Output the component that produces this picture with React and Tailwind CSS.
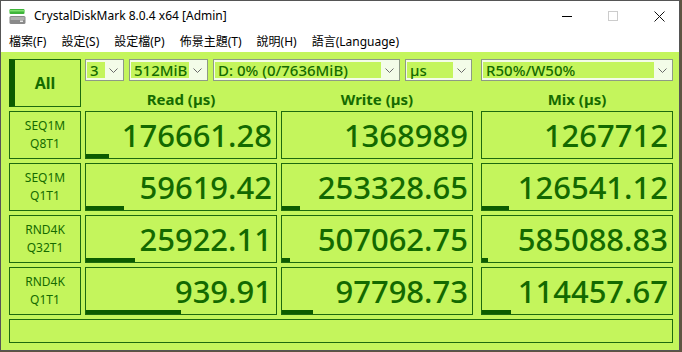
import React from "react";

const FONT = { fontFamily: '"Noto Sans", "Noto Sans CJK TC", sans-serif' };

const MENU = ["檔案(F)", "設定(S)", "設定檔(P)", "佈景主題(T)", "說明(H)", "語言(Language)"];

const ROWS = [
  { label: ["SEQ1M", "Q8T1"],  read: ["176661.28", 23], write: ["1368989", 0],    mix: ["1267712", 0] },
  { label: ["SEQ1M", "Q1T1"],  read: ["59619.42", 38],  write: ["253328.65", 18], mix: ["126541.12", 27] },
  { label: ["RND4K", "Q32T1"], read: ["25922.11", 49],  write: ["507062.75", 8],  mix: ["585088.83", 6] },
  { label: ["RND4K", "Q1T1"],  read: ["939.91", 95],    write: ["97798.73", 31],  mix: ["114457.67", 29] },
];

function Chevron() {
  return (
    <svg width="9" height="5" viewBox="0 0 9 5" className="shrink-0">
      <path d="M0.5 0.5 L4.5 4.5 L8.5 0.5" fill="none" stroke="#6a6a6a" strokeWidth="1" />
    </svg>
  );
}

function Combo({ text, className }) {
  return (
    <div className={`flex h-[22px] items-center border border-[#8e9a86] bg-[#f3fce8] py-[2px] pl-[1px] pr-[5px] ${className}`}>
      <div className="flex h-[16px] min-w-0 flex-1 items-center bg-[#c4f55c] pl-[3px] text-[15px] font-medium leading-[16px] text-[#156b00] whitespace-nowrap">
        {text}
      </div>
      <div className="ml-[4px]"><Chevron /></div>
    </div>
  );
}

function ValueBox({ value, bar, className = "" }) {
  return (
    <div className={`flex h-[48px] w-[192px] flex-col justify-between border border-[#1d6a0e] ${className}`}>
      <div className="pr-[4px] pt-[8px] text-right text-[31px] font-medium leading-none text-[#136900]">{value}</div>
      <div className="h-[4px] bg-[#0c5c00]" style={{ width: bar }} />
    </div>
  );
}

function AppIcon() {
  return (
    <svg width="17" height="17" viewBox="0 0 17 17">
      <rect x="0.5" y="1" width="15" height="5" rx="1" fill="#3fb53a" />
      <rect x="0.5" y="2" width="15" height="1.5" fill="#7fe070" />
      <rect x="0.5" y="8" width="16" height="8" rx="1.5" fill="#8a8a8a" />
      <rect x="1.5" y="9" width="14" height="3" fill="#b0b0b0" />
      <rect x="11" y="12.5" width="3" height="1.5" fill="#e8e8e8" />
    </svg>
  );
}

export default function App() {
  return (
    <div className="h-[352px] w-[682px] overflow-hidden bg-[#5e5442]" style={FONT}>
      <div className="flex h-[351px] w-[680px] flex-col border border-[#555555] bg-white">

        {/* ── Title bar ─────────────────────────────── */}
        <div className="flex h-[30px] items-center">
          <div className="ml-[8px]"><AppIcon /></div>
          <span className="ml-[8px] text-[12px] text-black">CrystalDiskMark 8.0.4 x64 [Admin]</span>
          <div className="ml-auto mr-[-3px] flex h-full">
            <div className="flex w-[46px] items-center justify-center">
              <div className="h-[1px] w-[10px] bg-black" />
            </div>
            <div className="flex w-[46px] items-center justify-center">
              <div className="h-[10px] w-[10px] border border-[#cccccc]" />
            </div>
            <div className="flex w-[46px] items-center justify-center">
              <svg width="11" height="11" viewBox="0 0 11 11">
                <path d="M0.5 0.5 L10.5 10.5 M10.5 0.5 L0.5 10.5" stroke="#111" strokeWidth="1" />
              </svg>
            </div>
          </div>
        </div>

        {/* ── Menu bar ──────────────────────────────── */}
        <div className="flex h-[21px] items-center gap-[15px] pl-[8px] text-[12px] text-black">
          {MENU.map((m) => (
            <span key={m}>{m}</span>
          ))}
        </div>

        {/* ── Main panel ────────────────────────────── */}
        <div className="flex flex-1 flex-col gap-[4px] bg-[#c4f55c] pl-[8px] pt-[7px]">
          <div className="flex h-[48px] gap-[4px]">
            <div className="flex w-[72px] items-center justify-center border border-l-[6px] border-[#1d6a0e] border-l-[#0c5c00] pr-[5px] text-[16px] font-bold text-[#156b00]">
              All
            </div>
            <div className="flex flex-col">
              <div className="flex">
                <Combo text="3" className="w-[39px]" />
                <Combo text="512MiB" className="ml-[5px] w-[79px]" />
                <Combo text="D: 0% (0/7636MiB)" className="ml-[5px] w-[187px]" />
                <Combo text="µs" className="ml-[5px] w-[67px]" />
                <Combo text="R50%/W50%" className="ml-[9px] w-[192px]" />
              </div>
              <div className="mt-[8px] flex text-[15px] font-bold leading-[20px] text-[#156b00]">
                <div className="w-[192px] text-center">Read (µs)</div>
                <div className="ml-[4px] w-[192px] text-center">Write (µs)</div>
                <div className="ml-[8px] w-[192px] text-center">Mix (µs)</div>
              </div>
            </div>
          </div>

          {ROWS.map((r) => (
            <div key={r.label.join()} className="flex gap-[4px]">
              <div className="flex h-[48px] w-[72px] flex-col items-center justify-center border border-[#1d6a0e] text-[12px] leading-[18px] text-[#156b00]">
                <span>{r.label[0]}</span>
                <span>{r.label[1]}</span>
              </div>
              <ValueBox value={r.read[0]} bar={r.read[1]} />
              <ValueBox value={r.write[0]} bar={r.write[1]} />
              <ValueBox value={r.mix[0]} bar={r.mix[1]} className="ml-[4px]" />
            </div>
          ))}

          <div className="h-[24px] w-[664px] border border-[#1d6a0e]" />
        </div>
      </div>
    </div>
  );
}
